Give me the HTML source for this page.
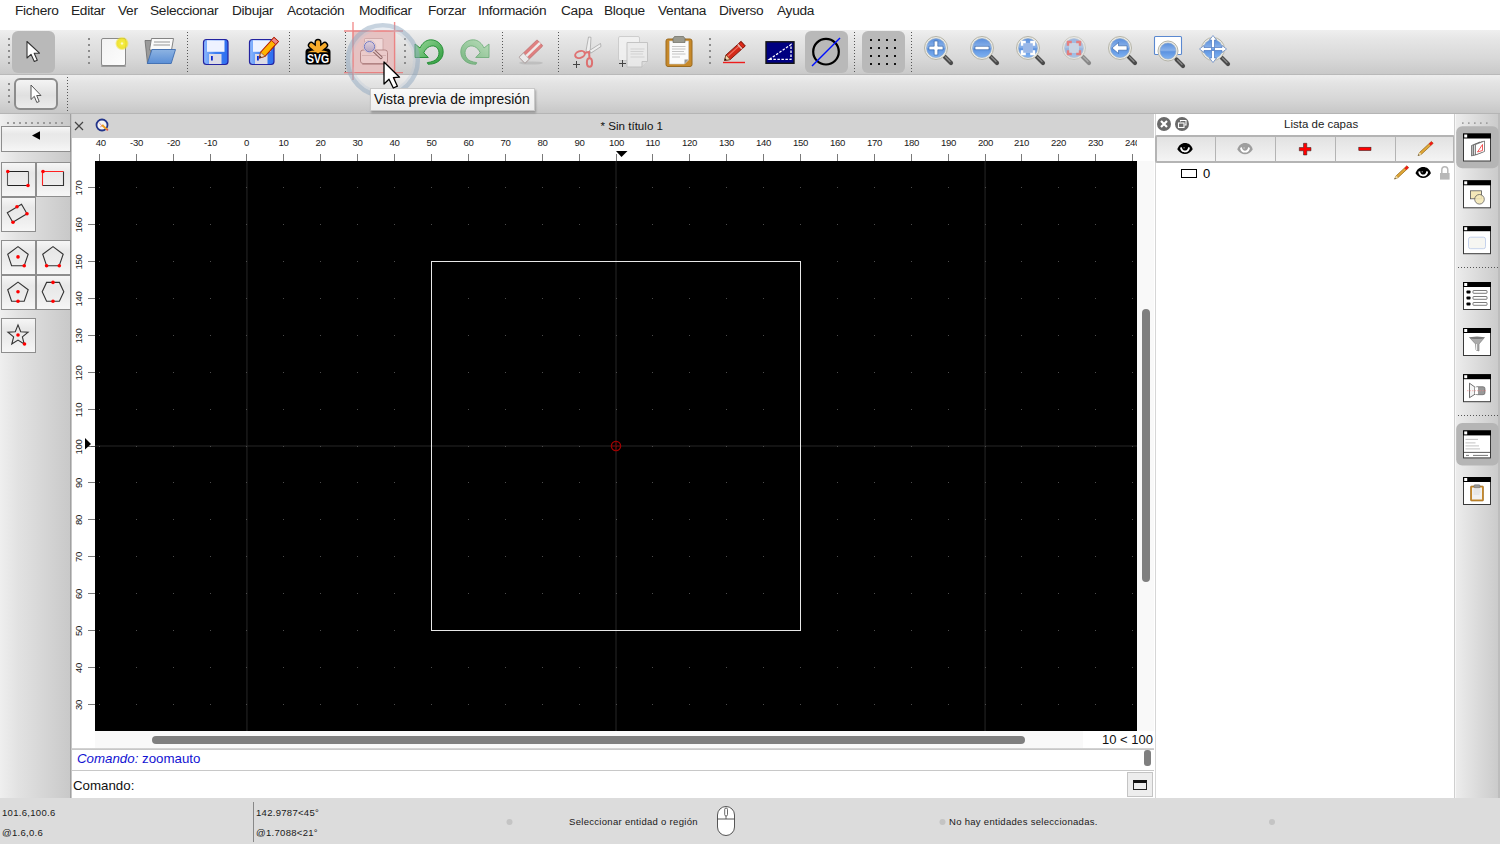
<!DOCTYPE html><html><head><meta charset="utf-8"><style>
*{margin:0;padding:0;box-sizing:border-box}
html,body{width:1500px;height:844px;overflow:hidden;background:#ececec;font-family:"Liberation Sans",sans-serif;color:#000}
.a{position:absolute}
.menu{left:0;top:0;width:1500px;height:30px;background:#fff}
.menu span{position:absolute;top:2.6px;font-size:13.7px;letter-spacing:-0.3px;color:#222}
.tb1{left:0;top:30px;width:1500px;height:45px;background:linear-gradient(#efefef,#e6e6e6 20%,#d8d8d8 65%,#c9c9c9);border-bottom:1px solid #b9b9b9}
.tb2{left:0;top:75px;width:1500px;height:39px;background:linear-gradient(#eeeeee,#e4e4e4 20%,#d6d6d6 65%,#c7c7c7);border-bottom:1px solid #b5b5b5}
.vsep{width:0;border-left:2px dotted #5a5a5a}
.grip{width:3px;background:radial-gradient(circle,#8a8a8a 1px,transparent 1.2px) 0 0/3px 8.5px}
.sel{background:#b9b9b9;border-radius:6px}
.tbx{left:0;top:114px;width:72px;height:684px;background:linear-gradient(90deg,#efefef,#e2e2e2 25%,#c9c9c9 97%,#9a9a9a 97.3%,#a8a8a8 98.6%,#c6c6c6 98.7%)}
.tbtn{width:34px;height:34px;background:linear-gradient(#f6f6f6,#e8e8e8 30%,#ececec 60%,#f6f6f6);border:1px solid #8e8e8e}
.mdi{left:72px;top:114px;width:1082px;height:684px;background:#fff}
.status{left:0;top:798px;width:1500px;height:46px;background:#dcdcdc}
.st{position:absolute;font-size:9.5px;letter-spacing:0.3px;color:#1a1a1a;white-space:nowrap}
.rl{position:absolute;font-size:9.6px;letter-spacing:-0.35px;color:#1a1a1a;white-space:nowrap}
.dock{left:1154px;top:114px;width:300px;height:684px;background:#fff}
.rtb{left:1454px;top:114px;width:46px;height:684px;background:linear-gradient(90deg,#cfcfcf 0 1px,#f6f6f6 1px 2px,#ececec 2px,#cbcbcb 44px,#bdbdbd 44px)}
</style></head><body>
<div class="a menu"><span style="left:15px">Fichero</span><span style="left:71px">Editar</span><span style="left:118px">Ver</span><span style="left:150px">Seleccionar</span><span style="left:232px">Dibujar</span><span style="left:287px">Acotación</span><span style="left:359px">Modificar</span><span style="left:428px">Forzar</span><span style="left:478px">Información</span><span style="left:561px">Capa</span><span style="left:604px">Bloque</span><span style="left:658px">Ventana</span><span style="left:719px">Diverso</span><span style="left:777px">Ayuda</span></div>
<div class="a tb1"></div>
<div class="a tb2"></div>
<div class="a sel" style="left:12px;top:31px;width:43px;height:42px"></div>
<div class="a sel" style="left:805px;top:31px;width:43px;height:42px"></div>
<div class="a sel" style="left:862px;top:31px;width:43px;height:42px"></div>
<div class="a" style="left:8px;top:38px;width:2px;height:2px;background:#8c8c8c"></div>
<div class="a" style="left:8px;top:44px;width:2px;height:2px;background:#8c8c8c"></div>
<div class="a" style="left:8px;top:50px;width:2px;height:2px;background:#8c8c8c"></div>
<div class="a" style="left:8px;top:56px;width:2px;height:2px;background:#8c8c8c"></div>
<div class="a" style="left:8px;top:62px;width:2px;height:2px;background:#8c8c8c"></div>
<div class="a" style="left:88px;top:38px;width:2px;height:2px;background:#8c8c8c"></div>
<div class="a" style="left:88px;top:44px;width:2px;height:2px;background:#8c8c8c"></div>
<div class="a" style="left:88px;top:50px;width:2px;height:2px;background:#8c8c8c"></div>
<div class="a" style="left:88px;top:56px;width:2px;height:2px;background:#8c8c8c"></div>
<div class="a" style="left:88px;top:62px;width:2px;height:2px;background:#8c8c8c"></div>
<div class="a" style="left:404px;top:38px;width:2px;height:2px;background:#8c8c8c"></div>
<div class="a" style="left:404px;top:44px;width:2px;height:2px;background:#8c8c8c"></div>
<div class="a" style="left:404px;top:50px;width:2px;height:2px;background:#8c8c8c"></div>
<div class="a" style="left:404px;top:56px;width:2px;height:2px;background:#8c8c8c"></div>
<div class="a" style="left:404px;top:62px;width:2px;height:2px;background:#8c8c8c"></div>
<div class="a" style="left:709px;top:38px;width:2px;height:2px;background:#8c8c8c"></div>
<div class="a" style="left:709px;top:44px;width:2px;height:2px;background:#8c8c8c"></div>
<div class="a" style="left:709px;top:50px;width:2px;height:2px;background:#8c8c8c"></div>
<div class="a" style="left:709px;top:56px;width:2px;height:2px;background:#8c8c8c"></div>
<div class="a" style="left:709px;top:62px;width:2px;height:2px;background:#8c8c8c"></div>
<div class="a" style="left:187px;top:32px;width:1px;height:41px;background:repeating-linear-gradient(#555 0 1px,transparent 1px 3px)"></div>
<div class="a" style="left:289px;top:32px;width:1px;height:41px;background:repeating-linear-gradient(#555 0 1px,transparent 1px 3px)"></div>
<div class="a" style="left:345px;top:32px;width:1px;height:41px;background:repeating-linear-gradient(#555 0 1px,transparent 1px 3px)"></div>
<div class="a" style="left:502px;top:32px;width:1px;height:41px;background:repeating-linear-gradient(#555 0 1px,transparent 1px 3px)"></div>
<div class="a" style="left:558px;top:32px;width:1px;height:41px;background:repeating-linear-gradient(#555 0 1px,transparent 1px 3px)"></div>
<div class="a" style="left:854px;top:32px;width:1px;height:41px;background:repeating-linear-gradient(#555 0 1px,transparent 1px 3px)"></div>
<div class="a" style="left:911px;top:32px;width:1px;height:41px;background:repeating-linear-gradient(#555 0 1px,transparent 1px 3px)"></div>
<div class="a" style="left:8px;top:83px;width:2px;height:2px;background:#8c8c8c"></div>
<div class="a" style="left:8px;top:89px;width:2px;height:2px;background:#8c8c8c"></div>
<div class="a" style="left:8px;top:95px;width:2px;height:2px;background:#8c8c8c"></div>
<div class="a" style="left:8px;top:101px;width:2px;height:2px;background:#8c8c8c"></div>
<div class="a" style="left:14px;top:78px;width:44px;height:32px;border:2px solid #8c8c8c;border-radius:6px;background:linear-gradient(#f4f4f4,#e0e0e0 55%,#ececec)"></div>
<div class="a" style="left:67px;top:77px;width:1px;height:34px;background:repeating-linear-gradient(#555 0 1px,transparent 1px 3px)"></div>
<svg class="a" style="left:0;top:0" width="1500" height="113"><defs>
<linearGradient id="lens" x1="0" y1="0" x2="0" y2="1"><stop offset="0" stop-color="#5a8fdc"/><stop offset="0.45" stop-color="#8ab2ea"/><stop offset="0.55" stop-color="#5d93e0"/><stop offset="1" stop-color="#7fb2f2"/></linearGradient>
<linearGradient id="flop" x1="0" y1="0" x2="1" y2="0"><stop offset="0" stop-color="#8fbaff"/><stop offset="0.5" stop-color="#3c7ef0"/><stop offset="1" stop-color="#2f6ff0"/></linearGradient>
<linearGradient id="folder" x1="0" y1="0" x2="0" y2="1"><stop offset="0" stop-color="#8db3e2"/><stop offset="1" stop-color="#5b8fd6"/></linearGradient>
<linearGradient id="green" x1="0" y1="0" x2="1" y2="1"><stop offset="0" stop-color="#9ad89a"/><stop offset="1" stop-color="#2a9a3a"/></linearGradient>
<radialGradient id="glow"><stop offset="0" stop-color="#ffffff"/><stop offset="0.25" stop-color="#f4ec40"/><stop offset="0.7" stop-color="#eee020" stop-opacity="0.9"/><stop offset="1" stop-color="#eee020" stop-opacity="0"/></radialGradient>
<linearGradient id="paper" x1="0" y1="0" x2="1" y2="1"><stop offset="0" stop-color="#f2f2f2"/><stop offset="1" stop-color="#fdfdfd"/></linearGradient>
</defs><path d="M27,41.5 L27,58 L31,54.3 L34.3,61.5 L37.3,60.2 L34.2,53.2 L39.5,53.2 Z" fill="#fff" stroke="#333" stroke-width="1.1" stroke-linejoin="round"/><path d="M31,85 L31,99.5 L34.3,96.3 L36.8,102.5 L39.2,101.5 L36.7,95.5 L41,95.5 Z" fill="#fff" stroke="#555" stroke-width="1" stroke-linejoin="round"/><rect x="101" y="65" width="25" height="2" rx="1" fill="#000" opacity="0.25"/><rect x="101.5" y="38.5" width="24" height="27" rx="1.5" fill="url(#paper)" stroke="#8a8a8a" stroke-width="1"/><circle cx="122" cy="43.5" r="7" fill="url(#glow)"/><path d="M145,40.5 L152,40.5 L150,63.5 L147.5,63.5 Z" fill="#9a9a9a" stroke="#6a6a6a" stroke-width="0.8"/><path d="M151.5,38.5 L173.5,38.5 L171.5,50 L149.5,50 Z" fill="#fafafa" stroke="#777" stroke-width="0.9"/><path d="M154,42 L170,42 M153.5,45 L170,45" stroke="#b8b8b8" stroke-width="1.4"/><path d="M152,49.5 L175.5,49.5 L171.2,63.5 L147.3,63.5 Z" fill="url(#folder)" stroke="#3d6cb0" stroke-width="0.9" stroke-linejoin="round"/><rect x="203.5" y="39.5" width="24.5" height="25" rx="3" fill="url(#flop)" stroke="#2323a0" stroke-width="1.2"/><rect x="207.0" y="40.3" width="17.5" height="11.5" fill="#eef2ff"/><rect x="209.0" y="54" width="12.5" height="10" fill="#dcdce6"/><rect x="211.0" y="56" width="1.8" height="4.5" fill="#0a2ad0"/><rect x="249.5" y="39.5" width="24.5" height="25" rx="3" fill="url(#flop)" stroke="#2323a0" stroke-width="1.2"/><rect x="253.0" y="40.3" width="17.5" height="11.5" fill="#eef2ff"/><rect x="255.0" y="54" width="12.5" height="10" fill="#dcdce6"/><rect x="257.0" y="56" width="1.8" height="4.5" fill="#0a2ad0"/><g transform="translate(259.5,58) rotate(-48)"><path d="M0,0 L5,-3 L25,-3 L25,3 L5,3 Z" fill="#ffb400" stroke="#b01a00" stroke-width="1"/><path d="M0,0 L5,-3 L5,3 Z" fill="#f0dcc0" stroke="#8a3a10" stroke-width="0.6"/><path d="M0,0 L2,-1.2 L2,1.2Z" fill="#222"/><rect x="21" y="-3" width="4" height="6" fill="#e88" stroke="#b01a00" stroke-width="0.8"/></g><rect x="305.5" y="48.5" width="25" height="16" rx="3.5" fill="#000"/><path d="M318,51 L318,42.3 M318,51 L311.3,45.3 M318,51 L324.7,45.3" stroke="#000" stroke-width="7" stroke-linecap="round"/><path d="M318,51 L318,42.3 M318,51 L311.3,45.3 M318,51 L324.7,45.3" stroke="#f7ab2b" stroke-width="4.2" stroke-linecap="round"/><path d="M307.5,52.3 C311,49.5 325,49.5 328.5,52.3 Z" fill="#f7ab2b"/><text x="318" y="63.3" text-anchor="middle" font-family="Liberation Sans" font-weight="bold" font-size="12.5" fill="#fff" transform="translate(318,0) scale(0.84,1) translate(-318,0)">SVG</text><path d="M415,44 L415,57.5 L428.3,57.5 L423.8,52.8 C426,47 432.5,43.8 436.8,47.5 C440.5,51 439.5,58.5 433.5,61 C431.8,61.8 429.5,62.3 427.3,62.6 L428,64.2 C434.5,64.5 441,61.5 442.8,55 C445,46.5 438,39.5 430.5,39.8 C425.8,40 422,43.5 420,48 Z" fill="url(#green)" stroke="#1e8a30" stroke-width="0.9" stroke-linejoin="round"/><g transform="translate(904,0) scale(-1,1)" opacity="0.55"><path d="M415,44 L415,57.5 L428.3,57.5 L423.8,52.8 C426,47 432.5,43.8 436.8,47.5 C440.5,51 439.5,58.5 433.5,61 C431.8,61.8 429.5,62.3 427.3,62.6 L428,64.2 C434.5,64.5 441,61.5 442.8,55 C445,46.5 438,39.5 430.5,39.8 C425.8,40 422,43.5 420,48 Z" fill="url(#green)" stroke="#1e8a30" stroke-width="0.9" stroke-linejoin="round"/></g><ellipse cx="531" cy="63" rx="12" ry="1.6" fill="#999" opacity="0.35"/><g transform="translate(531,51.5) rotate(-44)" opacity="0.7"><rect x="-12.5" y="-4.2" width="25" height="8.4" rx="1" fill="#e05858" stroke="#b04444" stroke-width="0.8"/><rect x="-12.5" y="-4.2" width="6" height="8.4" fill="#f2f2f2" stroke="#999" stroke-width="0.8"/><rect x="-6.5" y="-1.2" width="19" height="2.4" fill="#f6f0f0"/></g><g opacity="0.75"><path d="M586,51 L588.5,37 L591,37.3 L590,54 Z" fill="#f4f4f4" stroke="#888" stroke-width="0.7"/><path d="M589.5,50.5 L600.5,43.5 L601,46.5 L591,53 Z" fill="#f4f4f4" stroke="#888" stroke-width="0.7"/><ellipse cx="580" cy="54.5" rx="5" ry="3.3" transform="rotate(-20 580 54.5)" fill="none" stroke="#e05050" stroke-width="2"/><ellipse cx="589.5" cy="62.5" rx="2.6" ry="4.3" fill="none" stroke="#e05050" stroke-width="2"/><path d="M584,53 L589,52 L589.5,58" fill="none" stroke="#e05050" stroke-width="2"/></g><path d="M573,64.5 L580,64.5 M576.5,61 L576.5,68" stroke="#444" stroke-width="1"/><g opacity="0.8"><rect x="618.5" y="36.5" width="21" height="24" rx="1.5" fill="#f4f4f4" stroke="#c8c8c8"/><path d="M627,42.5 L647.5,42.5 L647.5,61 L642,67 L627,67 Z" fill="#eeeeee" stroke="#bdbdbd"/><path d="M642,67 L642,61.5 L647.5,61.5" fill="#ddd" stroke="#bdbdbd"/><path d="M630.5,49 L644.5,49 M630.5,51.5 L643.5,51.5 M630.5,54 L643,54 M630.5,57 L644.5,57" stroke="#cfcfcf" stroke-width="1"/></g><path d="M619,63.5 L626,63.5 M622.5,60 L622.5,67" stroke="#444" stroke-width="1"/><rect x="666" y="39" width="26" height="27.5" rx="2" fill="#c7892a" stroke="#9a6a20" stroke-width="1"/><path d="M669.5,41 L688.5,41 L688.5,60 L684.5,64 L669.5,64 Z" fill="#fbfbfb" stroke="#ccc" stroke-width="0.6"/><path d="M684.5,64 L684.5,59.5 L688.5,59.5 Z" fill="#999"/><path d="M672,46.5 L685.5,46.5 M672,49 L685.5,49 M672,51.5 L684,51.5 M672,54 L685.5,54 M672,57 L680,57" stroke="#c4c4c4" stroke-width="1"/><path d="M673,42.5 L673,38.5 L674.5,36.5 L683.5,36.5 L685,38.5 L685,42.5 Z" fill="#9a9a90" stroke="#6a6a60" stroke-width="0.7"/><rect x="723" y="61.8" width="22" height="1.4" fill="#ee1c1c"/><g transform="translate(724.5,60.5) rotate(-42)"><g transform="scale(0.97)"><path d="M0,0 L5,-3.2 L26,-3.2 L26,3.2 L5,3.2 Z" fill="#d42a1a" stroke="#7a1a10" stroke-width="0.9"/><path d="M5,-1 L26,-1" stroke="#f07060" stroke-width="1.2"/><path d="M0,0 L5,-3.2 L5,3.2 Z" fill="#f0d8b0" stroke="#6a3a10" stroke-width="0.6"/><path d="M0,0 L2,-1.2 L2,1.2Z" fill="#111"/><rect x="20.5" y="-3.2" width="2" height="6.4" fill="#e8b0a8"/><rect x="22.5" y="-3.2" width="3" height="6.4" rx="1" fill="#e02818" stroke="#7a1a10" stroke-width="0.6"/></g></g><rect x="766" y="41.8" width="28" height="21.5" fill="#000080" stroke="#141414" stroke-width="1.4"/><path d="M769.5,59.3 L791,44.5 L791,59.3 Z" fill="none" stroke="#fff" stroke-width="1.3" stroke-dasharray="2.5,1.5"/><circle cx="826" cy="51.7" r="12.8" fill="none" stroke="#000" stroke-width="2.2"/><line x1="812" y1="66" x2="840" y2="38" stroke="#0010ff" stroke-width="1.4"/><rect x="870" y="39" width="2" height="2" fill="#111"/><rect x="870" y="47" width="2" height="2" fill="#111"/><rect x="870" y="55" width="2" height="2" fill="#111"/><rect x="870" y="63" width="2" height="2" fill="#111"/><rect x="878" y="39" width="2" height="2" fill="#111"/><rect x="878" y="47" width="2" height="2" fill="#111"/><rect x="878" y="55" width="2" height="2" fill="#111"/><rect x="878" y="63" width="2" height="2" fill="#111"/><rect x="886" y="39" width="2" height="2" fill="#111"/><rect x="886" y="47" width="2" height="2" fill="#111"/><rect x="886" y="55" width="2" height="2" fill="#111"/><rect x="886" y="63" width="2" height="2" fill="#111"/><rect x="894" y="39" width="2" height="2" fill="#111"/><rect x="894" y="47" width="2" height="2" fill="#111"/><rect x="894" y="55" width="2" height="2" fill="#111"/><rect x="894" y="63" width="2" height="2" fill="#111"/><g><line x1="944.5" y1="56.5" x2="951" y2="63" stroke="#4a4a4a" stroke-width="4.2" stroke-linecap="round"/><line x1="945.5" y1="57" x2="950" y2="61.5" stroke="#8a8a8a" stroke-width="1.2" stroke-linecap="round"/><circle cx="936" cy="48" r="11.5" fill="#ecebe4" stroke="#b5b4a8" stroke-width="1"/><circle cx="936" cy="48" r="9.5" fill="url(#lens)" stroke="#8fa8c8" stroke-width="0.6"/><path d="M934.2,41 h3.6 v5.2 h5.2 v3.6 h-5.2 v5.2 h-3.6 v-5.2 h-5.2 v-3.6 h5.2 z" fill="#fff" stroke="#2a5aa0" stroke-width="0.6"/></g><g><line x1="990.5" y1="56.5" x2="997" y2="63" stroke="#4a4a4a" stroke-width="4.2" stroke-linecap="round"/><line x1="991.5" y1="57" x2="996" y2="61.5" stroke="#8a8a8a" stroke-width="1.2" stroke-linecap="round"/><circle cx="982" cy="48" r="11.5" fill="#ecebe4" stroke="#b5b4a8" stroke-width="1"/><circle cx="982" cy="48" r="9.5" fill="url(#lens)" stroke="#8fa8c8" stroke-width="0.6"/><rect x="975" y="46.2" width="14" height="3.6" fill="#fff" stroke="#2a5aa0" stroke-width="0.6"/></g><g><line x1="1036.5" y1="56.5" x2="1043" y2="63" stroke="#4a4a4a" stroke-width="4.2" stroke-linecap="round"/><line x1="1037.5" y1="57" x2="1042" y2="61.5" stroke="#8a8a8a" stroke-width="1.2" stroke-linecap="round"/><circle cx="1028" cy="48" r="11.5" fill="#ecebe4" stroke="#b5b4a8" stroke-width="1"/><circle cx="1028" cy="48" r="9.5" fill="url(#lens)" stroke="#8fa8c8" stroke-width="0.6"/><rect x="1023" y="43" width="10" height="10" fill="#9ab8e8"/><g stroke="#fff" stroke-width="2.4" fill="none"><path d="M1022,45.8 V42 H1025.8"/><path d="M1030.2,42 H1034 V45.8"/><path d="M1022,50.2 V54 H1025.8"/><path d="M1030.2,54 H1034 V50.2"/></g></g><g opacity="0.55"><line x1="1082.5" y1="56.5" x2="1089" y2="63" stroke="#4a4a4a" stroke-width="4.2" stroke-linecap="round"/><line x1="1083.5" y1="57" x2="1088" y2="61.5" stroke="#8a8a8a" stroke-width="1.2" stroke-linecap="round"/><circle cx="1074" cy="48" r="11.5" fill="#ecebe4" stroke="#b5b4a8" stroke-width="1"/><circle cx="1074" cy="48" r="9.5" fill="url(#lens)" stroke="#8fa8c8" stroke-width="0.6"/><rect x="1069" y="43" width="10" height="10" fill="#b8cde8"/><g stroke="#e83030" stroke-width="2.4" fill="none"><path d="M1068,45.8 V42 H1071.8"/><path d="M1076.2,42 H1080 V45.8"/><path d="M1068,50.2 V54 H1071.8"/><path d="M1076.2,54 H1080 V50.2"/></g></g><g><line x1="1128.5" y1="56.5" x2="1135" y2="63" stroke="#4a4a4a" stroke-width="4.2" stroke-linecap="round"/><line x1="1129.5" y1="57" x2="1134" y2="61.5" stroke="#8a8a8a" stroke-width="1.2" stroke-linecap="round"/><circle cx="1120" cy="48" r="11.5" fill="#ecebe4" stroke="#b5b4a8" stroke-width="1"/><circle cx="1120" cy="48" r="9.5" fill="url(#lens)" stroke="#8fa8c8" stroke-width="0.6"/><path d="M1112,48 L1118.5,42.5 L1118.5,45.8 L1127,45.8 L1127,50.2 L1118.5,50.2 L1118.5,53.5 Z" fill="#fff" stroke="#2a5aa0" stroke-width="0.6"/></g><rect x="1154.5" y="36.5" width="27" height="18" rx="1" fill="#fff" stroke="#5a88d0" stroke-width="1.1"/><g><line x1="1176.5" y1="59.5" x2="1183" y2="66" stroke="#4a4a4a" stroke-width="4.2" stroke-linecap="round"/><line x1="1177.5" y1="60" x2="1182" y2="64.5" stroke="#8a8a8a" stroke-width="1.2" stroke-linecap="round"/><circle cx="1168" cy="51" r="10" fill="#ecebe4" stroke="#b5b4a8" stroke-width="1"/><circle cx="1168" cy="51" r="8" fill="url(#lens)" stroke="#8fa8c8" stroke-width="0.6"/></g><g><line x1="1221.5" y1="57.5" x2="1228" y2="64" stroke="#4a4a4a" stroke-width="4.2" stroke-linecap="round"/><line x1="1222.5" y1="58" x2="1227" y2="62.5" stroke="#8a8a8a" stroke-width="1.2" stroke-linecap="round"/><circle cx="1213" cy="49" r="11.5" fill="#ecebe4" stroke="#b5b4a8" stroke-width="1"/><circle cx="1213" cy="49" r="9.5" fill="url(#lens)" stroke="#8fa8c8" stroke-width="0.6"/><g fill="#fff" stroke="#3a6ab8" stroke-width="0.6"><path d="M1213,35.5 L1216.5,40 L1214.5,40 L1214.5,47.5 L1211.5,47.5 L1211.5,40 L1209.5,40 Z"/><path d="M1213,62.5 L1216.5,58 L1214.5,58 L1214.5,50.5 L1211.5,50.5 L1211.5,58 L1209.5,58 Z"/><path d="M1199.5,49 L1204,45.5 L1204,47.5 L1211.5,47.5 L1211.5,50.5 L1204,50.5 L1204,52.5 Z"/><path d="M1226.5,49 L1222,45.5 L1222,47.5 L1214.5,47.5 L1214.5,50.5 L1222,50.5 L1222,52.5 Z"/></g></g></svg>
<svg class="a" style="left:0;top:0" width="1500" height="113">
<defs><linearGradient id="lensP" x1="0" y1="0" x2="0" y2="1"><stop offset="0" stop-color="#e0d0dc"/><stop offset="1" stop-color="#b4a4c0"/></linearGradient></defs>
<rect x="352.5" y="30.5" width="42" height="42" fill="#e6c2c2"/>
<rect x="362" y="63" width="24" height="2" rx="1" fill="#a06868" opacity="0.45"/>
<rect x="364.5" y="38.5" width="18.5" height="12" rx="1" fill="#f0d8d8" stroke="#c49c9c" stroke-width="0.7"/>
<rect x="360.5" y="50" width="27" height="13.5" rx="2.5" fill="#ebcaca" stroke="#a87878" stroke-width="0.8"/>
<path d="M362,55.5 H386" stroke="#c8a0a0" stroke-width="0.6"/>
<line x1="373.5" y1="50.5" x2="381" y2="57.5" stroke="#8a6060" stroke-width="3.2" stroke-linecap="round"/>
<line x1="373.5" y1="50.5" x2="381" y2="57.5" stroke="#e4c4c4" stroke-width="1.6" stroke-linecap="round"/>
<circle cx="369.5" cy="46.7" r="6.4" fill="#f4e2e2" stroke="#c8a8a8" stroke-width="0.5"/>
<circle cx="369.5" cy="46.7" r="5.2" fill="url(#lensP)" stroke="#6870c0" stroke-width="0.9"/>
<g stroke="#ee6a6a" stroke-width="1.4" opacity="0.75">
<line x1="353" y1="22" x2="353" y2="80"/><line x1="394.6" y1="22" x2="394.6" y2="80"/>
<line x1="344" y1="31" x2="403" y2="31"/><line x1="344" y1="72.6" x2="403" y2="72.6"/>
</g>
<circle cx="382.8" cy="60.3" r="35" fill="none" stroke="#8fa8c0" stroke-width="4.5" opacity="0.5"/>
<circle cx="382.8" cy="60.3" r="31.5" fill="none" stroke="#b8c8d8" stroke-width="2.5" opacity="0.3"/>
</svg>
<div class="a tbx"></div>
<div class="a" style="left:7.3px;top:122.3px;width:1.6px;height:1.6px;background:#9a9a9a"></div>
<div class="a" style="left:13.3px;top:122.3px;width:1.6px;height:1.6px;background:#9a9a9a"></div>
<div class="a" style="left:19.3px;top:122.3px;width:1.6px;height:1.6px;background:#9a9a9a"></div>
<div class="a" style="left:25.3px;top:122.3px;width:1.6px;height:1.6px;background:#9a9a9a"></div>
<div class="a" style="left:31.3px;top:122.3px;width:1.6px;height:1.6px;background:#9a9a9a"></div>
<div class="a" style="left:37.3px;top:122.3px;width:1.6px;height:1.6px;background:#9a9a9a"></div>
<div class="a" style="left:43.3px;top:122.3px;width:1.6px;height:1.6px;background:#9a9a9a"></div>
<div class="a" style="left:49.3px;top:122.3px;width:1.6px;height:1.6px;background:#9a9a9a"></div>
<div class="a" style="left:55.3px;top:122.3px;width:1.6px;height:1.6px;background:#9a9a9a"></div>
<div class="a" style="left:61.3px;top:122.3px;width:1.6px;height:1.6px;background:#9a9a9a"></div>
<div class="a tbtn" style="left:1px;top:126px;width:70px;height:26px"></div>
<svg class="a" style="left:0;top:113px" width="72" height="40"><path d="M32,22.5 L40,18.3 L40,26.8 Z" fill="#000"/></svg>
<div class="a tbtn" style="left:1px;top:162px;width:35px;height:35px"></div>
<div class="a tbtn" style="left:36px;top:162px;width:35px;height:35px"></div>
<div class="a tbtn" style="left:1px;top:197px;width:35px;height:35px"></div>
<div class="a tbtn" style="left:1px;top:240px;width:35px;height:35px"></div>
<div class="a tbtn" style="left:36px;top:240px;width:35px;height:35px"></div>
<div class="a tbtn" style="left:1px;top:275px;width:35px;height:35px"></div>
<div class="a tbtn" style="left:36px;top:275px;width:35px;height:35px"></div>
<div class="a tbtn" style="left:1px;top:318px;width:35px;height:35px"></div>
<svg class="a" style="left:0;top:113px" width="72" height="250"><g transform="translate(0,-113)"><path d="M7.5,171.5 H28.5 M7.5,185.5 H28.5" stroke="#222" stroke-width="1.1"/><path d="M7.5,171.5 V185.5 M28.5,171.5 V185.5" stroke="#555" stroke-width="1.1"/><circle cx="7.8" cy="171.5" r="1.8" fill="#ff0000"/><circle cx="28" cy="185.5" r="1.8" fill="#ff0000"/><path d="M42.5,185.5 H63.5 V171.5" fill="none" stroke="#333" stroke-width="1.1"/><path d="M42.5,185.5 V171.5 H63.5" fill="none" stroke="#ff2020" stroke-width="1.1"/><circle cx="43" cy="171.5" r="1.8" fill="#ff0000"/><path d="M7.3,212.7 L21.5,204.3 L27,213.8 L12.8,222.2 Z" fill="none" stroke="#333" stroke-width="1.1"/><circle cx="17" cy="206.8" r="1.8" fill="#ff0000"/><circle cx="27" cy="213.8" r="1.8" fill="#ff0000"/><circle cx="13" cy="222.2" r="1.8" fill="#ff0000"/><path d="M18,246.6 L28.2,254.29999999999998 L24.2,265.8 L11.6,265.8 L7.699999999999999,254.29999999999998 Z" fill="none" stroke="#333" stroke-width="1.1"/><circle cx="18" cy="256.9" r="1.8" fill="#ff0000"/><circle cx="24.2" cy="265.8" r="1.8" fill="#ff0000"/><path d="M53,246.6 L63.2,254.29999999999998 L59.2,265.8 L46.6,265.8 L42.7,254.29999999999998 Z" fill="none" stroke="#333" stroke-width="1.1"/><circle cx="46.6" cy="265.8" r="1.8" fill="#ff0000"/><circle cx="59.3" cy="265.8" r="1.8" fill="#ff0000"/><path d="M18,282.1 L28.2,289.8 L24.2,301.3 L11.6,301.3 L7.699999999999999,289.8 Z" fill="none" stroke="#333" stroke-width="1.1"/><circle cx="18" cy="291.8" r="1.8" fill="#ff0000"/><circle cx="18" cy="301.2" r="1.8" fill="#ff0000"/><path d="M42.2,291.8 L46.6,282.4 L59.4,282.4 L63.8,291.8 L59.4,301.2 L46.6,301.2 Z" fill="none" stroke="#333" stroke-width="1.1"/><circle cx="53" cy="282.4" r="1.8" fill="#ff0000"/><circle cx="53" cy="301.2" r="1.8" fill="#ff0000"/><polygon points="18.00,324.90 20.70,331.78 28.08,332.22 22.37,336.92 24.23,344.08 18.00,340.10 11.77,344.08 13.63,336.92 7.92,332.22 15.30,331.78" fill="none" stroke="#333" stroke-width="1.1" stroke-linejoin="miter"/><circle cx="18" cy="335" r="1.8" fill="#ff0000"/><circle cx="24.5" cy="344" r="1.8" fill="#ff0000"/></g></svg>
<div class="a mdi"></div>
<div class="a" style="left:72px;top:114px;width:1082px;height:24px;background:#d3d3d3"></div>
<div class="a" style="left:600.5px;top:118.5px;font-size:11.6px;color:#111">* Sin título 1</div>
<svg class="a" style="left:70px;top:113px" width="50" height="25"><path d="M5,9 L13,17 M13,9 L5,17" stroke="#444" stroke-width="1.2"/><circle cx="32" cy="12" r="5.5" fill="#f4f4f4" stroke="#22348a" stroke-width="1.8"/><path d="M29,9.5 L32,13 M30,14 L34,12" stroke="#c44" stroke-width="0.5"/><path d="M32,12 L37,16.5" stroke="#f0a020" stroke-width="2"/><circle cx="37.3" cy="16.8" r="1" fill="#e05050"/></svg>
<div class="a" style="left:95px;top:161px;width:1042px;height:570px;background:#000"></div>
<div class="a" style="left:1137px;top:161px;width:17px;height:570px;background:#f9f9f9"></div>
<div class="a" style="left:1142px;top:309px;width:8px;height:273px;background:#7f7f7f;border-radius:4px"></div>
<div class="a" style="left:95px;top:731px;width:988px;height:17px;background:#f9f9f9"></div>
<div class="a" style="left:152px;top:736px;width:873px;height:8px;background:#7f7f7f;border-radius:4px"></div>
<div class="a" style="left:1053px;top:732px;width:100px;text-align:right;font-size:13px;color:#111">10 &lt; 100</div>
<div class="a" style="left:72px;top:748px;width:1082px;height:2px;background:linear-gradient(#d8d8d8,#c2c2c2)"></div>
<div class="a" style="left:72px;top:750px;width:1082px;height:21px;background:#fff;border-bottom:1px solid #c8c8c8"></div>
<div class="a" style="left:77px;top:751px;font-size:13.3px;color:#1212d2"><i>Comando:</i> zoomauto</div>
<div class="a" style="left:1144px;top:750px;width:7px;height:16px;background:#7f7f7f;border-radius:3px"></div>
<div class="a" style="left:73px;top:778px;font-size:13.3px;color:#111">Comando:</div>
<div class="a" style="left:1127px;top:772px;width:26px;height:25px;background:#ededed;border:1px solid #c4c4c4"></div>
<div class="a" style="left:1133px;top:780px;width:14px;height:10px;border:1px solid #222;border-top:3px solid #111"></div>
<svg class="a" style="left:0;top:0" width="1500" height="844"><rect x="99" y="154" width="1" height="7" fill="#7a7a7a"/><rect x="136" y="154" width="1" height="7" fill="#7a7a7a"/><rect x="173" y="154" width="1" height="7" fill="#7a7a7a"/><rect x="210" y="154" width="1" height="7" fill="#7a7a7a"/><rect x="246" y="154" width="1" height="7" fill="#7a7a7a"/><rect x="283" y="154" width="1" height="7" fill="#7a7a7a"/><rect x="320" y="154" width="1" height="7" fill="#7a7a7a"/><rect x="357" y="154" width="1" height="7" fill="#7a7a7a"/><rect x="394" y="154" width="1" height="7" fill="#7a7a7a"/><rect x="431" y="154" width="1" height="7" fill="#7a7a7a"/><rect x="468" y="154" width="1" height="7" fill="#7a7a7a"/><rect x="505" y="154" width="1" height="7" fill="#7a7a7a"/><rect x="542" y="154" width="1" height="7" fill="#7a7a7a"/><rect x="579" y="154" width="1" height="7" fill="#7a7a7a"/><rect x="616" y="154" width="1" height="7" fill="#7a7a7a"/><rect x="652" y="154" width="1" height="7" fill="#7a7a7a"/><rect x="689" y="154" width="1" height="7" fill="#7a7a7a"/><rect x="726" y="154" width="1" height="7" fill="#7a7a7a"/><rect x="763" y="154" width="1" height="7" fill="#7a7a7a"/><rect x="800" y="154" width="1" height="7" fill="#7a7a7a"/><rect x="837" y="154" width="1" height="7" fill="#7a7a7a"/><rect x="874" y="154" width="1" height="7" fill="#7a7a7a"/><rect x="911" y="154" width="1" height="7" fill="#7a7a7a"/><rect x="948" y="154" width="1" height="7" fill="#7a7a7a"/><rect x="985" y="154" width="1" height="7" fill="#7a7a7a"/><rect x="1021" y="154" width="1" height="7" fill="#7a7a7a"/><rect x="1058" y="154" width="1" height="7" fill="#7a7a7a"/><rect x="1095" y="154" width="1" height="7" fill="#7a7a7a"/><rect x="1132" y="154" width="1" height="7" fill="#7a7a7a"/><rect x="88" y="704" width="7" height="1" fill="#7a7a7a"/><rect x="88" y="667" width="7" height="1" fill="#7a7a7a"/><rect x="88" y="630" width="7" height="1" fill="#7a7a7a"/><rect x="88" y="593" width="7" height="1" fill="#7a7a7a"/><rect x="88" y="556" width="7" height="1" fill="#7a7a7a"/><rect x="88" y="519" width="7" height="1" fill="#7a7a7a"/><rect x="88" y="482" width="7" height="1" fill="#7a7a7a"/><rect x="88" y="446" width="7" height="1" fill="#7a7a7a"/><rect x="88" y="409" width="7" height="1" fill="#7a7a7a"/><rect x="88" y="372" width="7" height="1" fill="#7a7a7a"/><rect x="88" y="335" width="7" height="1" fill="#7a7a7a"/><rect x="88" y="298" width="7" height="1" fill="#7a7a7a"/><rect x="88" y="261" width="7" height="1" fill="#7a7a7a"/><rect x="88" y="224" width="7" height="1" fill="#7a7a7a"/><rect x="88" y="187" width="7" height="1" fill="#7a7a7a"/></svg>
<div class="a" style="left:95px;top:138px;width:1042px;height:14px;overflow:hidden">
<div class="rl" style="left:-49.2px;top:-0.8px;width:60px;text-align:right">40</div>
<div class="rl" style="left:11.5px;top:-0.8px;width:60px;text-align:center">-30</div>
<div class="rl" style="left:48.5px;top:-0.8px;width:60px;text-align:center">-20</div>
<div class="rl" style="left:85.5px;top:-0.8px;width:60px;text-align:center">-10</div>
<div class="rl" style="left:121.5px;top:-0.8px;width:60px;text-align:center">0</div>
<div class="rl" style="left:158.5px;top:-0.8px;width:60px;text-align:center">10</div>
<div class="rl" style="left:195.5px;top:-0.8px;width:60px;text-align:center">20</div>
<div class="rl" style="left:232.5px;top:-0.8px;width:60px;text-align:center">30</div>
<div class="rl" style="left:269.5px;top:-0.8px;width:60px;text-align:center">40</div>
<div class="rl" style="left:306.5px;top:-0.8px;width:60px;text-align:center">50</div>
<div class="rl" style="left:343.5px;top:-0.8px;width:60px;text-align:center">60</div>
<div class="rl" style="left:380.5px;top:-0.8px;width:60px;text-align:center">70</div>
<div class="rl" style="left:417.5px;top:-0.8px;width:60px;text-align:center">80</div>
<div class="rl" style="left:454.5px;top:-0.8px;width:60px;text-align:center">90</div>
<div class="rl" style="left:491.5px;top:-0.8px;width:60px;text-align:center">100</div>
<div class="rl" style="left:527.5px;top:-0.8px;width:60px;text-align:center">110</div>
<div class="rl" style="left:564.5px;top:-0.8px;width:60px;text-align:center">120</div>
<div class="rl" style="left:601.5px;top:-0.8px;width:60px;text-align:center">130</div>
<div class="rl" style="left:638.5px;top:-0.8px;width:60px;text-align:center">140</div>
<div class="rl" style="left:675.5px;top:-0.8px;width:60px;text-align:center">150</div>
<div class="rl" style="left:712.5px;top:-0.8px;width:60px;text-align:center">160</div>
<div class="rl" style="left:749.5px;top:-0.8px;width:60px;text-align:center">170</div>
<div class="rl" style="left:786.5px;top:-0.8px;width:60px;text-align:center">180</div>
<div class="rl" style="left:823.5px;top:-0.8px;width:60px;text-align:center">190</div>
<div class="rl" style="left:860.5px;top:-0.8px;width:60px;text-align:center">200</div>
<div class="rl" style="left:896.5px;top:-0.8px;width:60px;text-align:center">210</div>
<div class="rl" style="left:933.5px;top:-0.8px;width:60px;text-align:center">220</div>
<div class="rl" style="left:970.5px;top:-0.8px;width:60px;text-align:center">230</div>
<div class="rl" style="left:1007.5px;top:-0.8px;width:60px;text-align:center">240</div>
</div>
<div class="rl" style="left:48.5px;top:698.5px;width:60px;height:12px;text-align:center;transform:rotate(-90deg)">30</div>
<div class="rl" style="left:48.5px;top:661.5px;width:60px;height:12px;text-align:center;transform:rotate(-90deg)">40</div>
<div class="rl" style="left:48.5px;top:624.5px;width:60px;height:12px;text-align:center;transform:rotate(-90deg)">50</div>
<div class="rl" style="left:48.5px;top:587.5px;width:60px;height:12px;text-align:center;transform:rotate(-90deg)">60</div>
<div class="rl" style="left:48.5px;top:550.5px;width:60px;height:12px;text-align:center;transform:rotate(-90deg)">70</div>
<div class="rl" style="left:48.5px;top:513.5px;width:60px;height:12px;text-align:center;transform:rotate(-90deg)">80</div>
<div class="rl" style="left:48.5px;top:476.5px;width:60px;height:12px;text-align:center;transform:rotate(-90deg)">90</div>
<div class="rl" style="left:48.5px;top:440.5px;width:60px;height:12px;text-align:center;transform:rotate(-90deg)">100</div>
<div class="rl" style="left:48.5px;top:403.5px;width:60px;height:12px;text-align:center;transform:rotate(-90deg)">110</div>
<div class="rl" style="left:48.5px;top:366.5px;width:60px;height:12px;text-align:center;transform:rotate(-90deg)">120</div>
<div class="rl" style="left:48.5px;top:329.5px;width:60px;height:12px;text-align:center;transform:rotate(-90deg)">130</div>
<div class="rl" style="left:48.5px;top:292.5px;width:60px;height:12px;text-align:center;transform:rotate(-90deg)">140</div>
<div class="rl" style="left:48.5px;top:255.5px;width:60px;height:12px;text-align:center;transform:rotate(-90deg)">150</div>
<div class="rl" style="left:48.5px;top:218.5px;width:60px;height:12px;text-align:center;transform:rotate(-90deg)">160</div>
<div class="rl" style="left:48.5px;top:181.5px;width:60px;height:12px;text-align:center;transform:rotate(-90deg)">170</div>
<svg class="a" style="left:0;top:0" width="700" height="460"><path d="M616,151 L627.5,151 L621.5,157 Z" fill="#000"/><path d="M85,438 L85,449.5 L91,444 Z" fill="#000"/><rect x="91" y="446" width="4" height="1" fill="#555"/></svg>
<svg class="a" style="left:95px;top:161px" width="1042" height="570"><g transform="translate(-95,-161)"><rect x="246.45" y="161" width="1" height="570" fill="#262626"/><rect x="615.50" y="161" width="1" height="570" fill="#262626"/><rect x="984.55" y="161" width="1" height="570" fill="#262626"/><rect x="95" y="445.50" width="1042" height="1" fill="#262626"/><rect x="99" y="704" width="1" height="1" fill="#4c4c4c"/><rect x="99" y="667" width="1" height="1" fill="#4c4c4c"/><rect x="99" y="630" width="1" height="1" fill="#4c4c4c"/><rect x="99" y="593" width="1" height="1" fill="#4c4c4c"/><rect x="99" y="556" width="1" height="1" fill="#4c4c4c"/><rect x="99" y="519" width="1" height="1" fill="#4c4c4c"/><rect x="99" y="482" width="1" height="1" fill="#4c4c4c"/><rect x="99" y="446" width="1" height="1" fill="#4c4c4c"/><rect x="99" y="409" width="1" height="1" fill="#4c4c4c"/><rect x="99" y="372" width="1" height="1" fill="#4c4c4c"/><rect x="99" y="335" width="1" height="1" fill="#4c4c4c"/><rect x="99" y="298" width="1" height="1" fill="#4c4c4c"/><rect x="99" y="261" width="1" height="1" fill="#4c4c4c"/><rect x="99" y="224" width="1" height="1" fill="#4c4c4c"/><rect x="99" y="187" width="1" height="1" fill="#4c4c4c"/><rect x="136" y="704" width="1" height="1" fill="#4c4c4c"/><rect x="136" y="667" width="1" height="1" fill="#4c4c4c"/><rect x="136" y="630" width="1" height="1" fill="#4c4c4c"/><rect x="136" y="593" width="1" height="1" fill="#4c4c4c"/><rect x="136" y="556" width="1" height="1" fill="#4c4c4c"/><rect x="136" y="519" width="1" height="1" fill="#4c4c4c"/><rect x="136" y="482" width="1" height="1" fill="#4c4c4c"/><rect x="136" y="446" width="1" height="1" fill="#4c4c4c"/><rect x="136" y="409" width="1" height="1" fill="#4c4c4c"/><rect x="136" y="372" width="1" height="1" fill="#4c4c4c"/><rect x="136" y="335" width="1" height="1" fill="#4c4c4c"/><rect x="136" y="298" width="1" height="1" fill="#4c4c4c"/><rect x="136" y="261" width="1" height="1" fill="#4c4c4c"/><rect x="136" y="224" width="1" height="1" fill="#4c4c4c"/><rect x="136" y="187" width="1" height="1" fill="#4c4c4c"/><rect x="173" y="704" width="1" height="1" fill="#4c4c4c"/><rect x="173" y="667" width="1" height="1" fill="#4c4c4c"/><rect x="173" y="630" width="1" height="1" fill="#4c4c4c"/><rect x="173" y="593" width="1" height="1" fill="#4c4c4c"/><rect x="173" y="556" width="1" height="1" fill="#4c4c4c"/><rect x="173" y="519" width="1" height="1" fill="#4c4c4c"/><rect x="173" y="482" width="1" height="1" fill="#4c4c4c"/><rect x="173" y="446" width="1" height="1" fill="#4c4c4c"/><rect x="173" y="409" width="1" height="1" fill="#4c4c4c"/><rect x="173" y="372" width="1" height="1" fill="#4c4c4c"/><rect x="173" y="335" width="1" height="1" fill="#4c4c4c"/><rect x="173" y="298" width="1" height="1" fill="#4c4c4c"/><rect x="173" y="261" width="1" height="1" fill="#4c4c4c"/><rect x="173" y="224" width="1" height="1" fill="#4c4c4c"/><rect x="173" y="187" width="1" height="1" fill="#4c4c4c"/><rect x="210" y="704" width="1" height="1" fill="#4c4c4c"/><rect x="210" y="667" width="1" height="1" fill="#4c4c4c"/><rect x="210" y="630" width="1" height="1" fill="#4c4c4c"/><rect x="210" y="593" width="1" height="1" fill="#4c4c4c"/><rect x="210" y="556" width="1" height="1" fill="#4c4c4c"/><rect x="210" y="519" width="1" height="1" fill="#4c4c4c"/><rect x="210" y="482" width="1" height="1" fill="#4c4c4c"/><rect x="210" y="446" width="1" height="1" fill="#4c4c4c"/><rect x="210" y="409" width="1" height="1" fill="#4c4c4c"/><rect x="210" y="372" width="1" height="1" fill="#4c4c4c"/><rect x="210" y="335" width="1" height="1" fill="#4c4c4c"/><rect x="210" y="298" width="1" height="1" fill="#4c4c4c"/><rect x="210" y="261" width="1" height="1" fill="#4c4c4c"/><rect x="210" y="224" width="1" height="1" fill="#4c4c4c"/><rect x="210" y="187" width="1" height="1" fill="#4c4c4c"/><rect x="246" y="704" width="1" height="1" fill="#4c4c4c"/><rect x="246" y="667" width="1" height="1" fill="#4c4c4c"/><rect x="246" y="630" width="1" height="1" fill="#4c4c4c"/><rect x="246" y="593" width="1" height="1" fill="#4c4c4c"/><rect x="246" y="556" width="1" height="1" fill="#4c4c4c"/><rect x="246" y="519" width="1" height="1" fill="#4c4c4c"/><rect x="246" y="482" width="1" height="1" fill="#4c4c4c"/><rect x="246" y="446" width="1" height="1" fill="#4c4c4c"/><rect x="246" y="409" width="1" height="1" fill="#4c4c4c"/><rect x="246" y="372" width="1" height="1" fill="#4c4c4c"/><rect x="246" y="335" width="1" height="1" fill="#4c4c4c"/><rect x="246" y="298" width="1" height="1" fill="#4c4c4c"/><rect x="246" y="261" width="1" height="1" fill="#4c4c4c"/><rect x="246" y="224" width="1" height="1" fill="#4c4c4c"/><rect x="246" y="187" width="1" height="1" fill="#4c4c4c"/><rect x="283" y="704" width="1" height="1" fill="#4c4c4c"/><rect x="283" y="667" width="1" height="1" fill="#4c4c4c"/><rect x="283" y="630" width="1" height="1" fill="#4c4c4c"/><rect x="283" y="593" width="1" height="1" fill="#4c4c4c"/><rect x="283" y="556" width="1" height="1" fill="#4c4c4c"/><rect x="283" y="519" width="1" height="1" fill="#4c4c4c"/><rect x="283" y="482" width="1" height="1" fill="#4c4c4c"/><rect x="283" y="446" width="1" height="1" fill="#4c4c4c"/><rect x="283" y="409" width="1" height="1" fill="#4c4c4c"/><rect x="283" y="372" width="1" height="1" fill="#4c4c4c"/><rect x="283" y="335" width="1" height="1" fill="#4c4c4c"/><rect x="283" y="298" width="1" height="1" fill="#4c4c4c"/><rect x="283" y="261" width="1" height="1" fill="#4c4c4c"/><rect x="283" y="224" width="1" height="1" fill="#4c4c4c"/><rect x="283" y="187" width="1" height="1" fill="#4c4c4c"/><rect x="320" y="704" width="1" height="1" fill="#4c4c4c"/><rect x="320" y="667" width="1" height="1" fill="#4c4c4c"/><rect x="320" y="630" width="1" height="1" fill="#4c4c4c"/><rect x="320" y="593" width="1" height="1" fill="#4c4c4c"/><rect x="320" y="556" width="1" height="1" fill="#4c4c4c"/><rect x="320" y="519" width="1" height="1" fill="#4c4c4c"/><rect x="320" y="482" width="1" height="1" fill="#4c4c4c"/><rect x="320" y="446" width="1" height="1" fill="#4c4c4c"/><rect x="320" y="409" width="1" height="1" fill="#4c4c4c"/><rect x="320" y="372" width="1" height="1" fill="#4c4c4c"/><rect x="320" y="335" width="1" height="1" fill="#4c4c4c"/><rect x="320" y="298" width="1" height="1" fill="#4c4c4c"/><rect x="320" y="261" width="1" height="1" fill="#4c4c4c"/><rect x="320" y="224" width="1" height="1" fill="#4c4c4c"/><rect x="320" y="187" width="1" height="1" fill="#4c4c4c"/><rect x="357" y="704" width="1" height="1" fill="#4c4c4c"/><rect x="357" y="667" width="1" height="1" fill="#4c4c4c"/><rect x="357" y="630" width="1" height="1" fill="#4c4c4c"/><rect x="357" y="593" width="1" height="1" fill="#4c4c4c"/><rect x="357" y="556" width="1" height="1" fill="#4c4c4c"/><rect x="357" y="519" width="1" height="1" fill="#4c4c4c"/><rect x="357" y="482" width="1" height="1" fill="#4c4c4c"/><rect x="357" y="446" width="1" height="1" fill="#4c4c4c"/><rect x="357" y="409" width="1" height="1" fill="#4c4c4c"/><rect x="357" y="372" width="1" height="1" fill="#4c4c4c"/><rect x="357" y="335" width="1" height="1" fill="#4c4c4c"/><rect x="357" y="298" width="1" height="1" fill="#4c4c4c"/><rect x="357" y="261" width="1" height="1" fill="#4c4c4c"/><rect x="357" y="224" width="1" height="1" fill="#4c4c4c"/><rect x="357" y="187" width="1" height="1" fill="#4c4c4c"/><rect x="394" y="704" width="1" height="1" fill="#4c4c4c"/><rect x="394" y="667" width="1" height="1" fill="#4c4c4c"/><rect x="394" y="630" width="1" height="1" fill="#4c4c4c"/><rect x="394" y="593" width="1" height="1" fill="#4c4c4c"/><rect x="394" y="556" width="1" height="1" fill="#4c4c4c"/><rect x="394" y="519" width="1" height="1" fill="#4c4c4c"/><rect x="394" y="482" width="1" height="1" fill="#4c4c4c"/><rect x="394" y="446" width="1" height="1" fill="#4c4c4c"/><rect x="394" y="409" width="1" height="1" fill="#4c4c4c"/><rect x="394" y="372" width="1" height="1" fill="#4c4c4c"/><rect x="394" y="335" width="1" height="1" fill="#4c4c4c"/><rect x="394" y="298" width="1" height="1" fill="#4c4c4c"/><rect x="394" y="261" width="1" height="1" fill="#4c4c4c"/><rect x="394" y="224" width="1" height="1" fill="#4c4c4c"/><rect x="394" y="187" width="1" height="1" fill="#4c4c4c"/><rect x="431" y="704" width="1" height="1" fill="#4c4c4c"/><rect x="431" y="667" width="1" height="1" fill="#4c4c4c"/><rect x="431" y="630" width="1" height="1" fill="#4c4c4c"/><rect x="431" y="593" width="1" height="1" fill="#4c4c4c"/><rect x="431" y="556" width="1" height="1" fill="#4c4c4c"/><rect x="431" y="519" width="1" height="1" fill="#4c4c4c"/><rect x="431" y="482" width="1" height="1" fill="#4c4c4c"/><rect x="431" y="446" width="1" height="1" fill="#4c4c4c"/><rect x="431" y="409" width="1" height="1" fill="#4c4c4c"/><rect x="431" y="372" width="1" height="1" fill="#4c4c4c"/><rect x="431" y="335" width="1" height="1" fill="#4c4c4c"/><rect x="431" y="298" width="1" height="1" fill="#4c4c4c"/><rect x="431" y="261" width="1" height="1" fill="#4c4c4c"/><rect x="431" y="224" width="1" height="1" fill="#4c4c4c"/><rect x="431" y="187" width="1" height="1" fill="#4c4c4c"/><rect x="468" y="704" width="1" height="1" fill="#4c4c4c"/><rect x="468" y="667" width="1" height="1" fill="#4c4c4c"/><rect x="468" y="630" width="1" height="1" fill="#4c4c4c"/><rect x="468" y="593" width="1" height="1" fill="#4c4c4c"/><rect x="468" y="556" width="1" height="1" fill="#4c4c4c"/><rect x="468" y="519" width="1" height="1" fill="#4c4c4c"/><rect x="468" y="482" width="1" height="1" fill="#4c4c4c"/><rect x="468" y="446" width="1" height="1" fill="#4c4c4c"/><rect x="468" y="409" width="1" height="1" fill="#4c4c4c"/><rect x="468" y="372" width="1" height="1" fill="#4c4c4c"/><rect x="468" y="335" width="1" height="1" fill="#4c4c4c"/><rect x="468" y="298" width="1" height="1" fill="#4c4c4c"/><rect x="468" y="261" width="1" height="1" fill="#4c4c4c"/><rect x="468" y="224" width="1" height="1" fill="#4c4c4c"/><rect x="468" y="187" width="1" height="1" fill="#4c4c4c"/><rect x="505" y="704" width="1" height="1" fill="#4c4c4c"/><rect x="505" y="667" width="1" height="1" fill="#4c4c4c"/><rect x="505" y="630" width="1" height="1" fill="#4c4c4c"/><rect x="505" y="593" width="1" height="1" fill="#4c4c4c"/><rect x="505" y="556" width="1" height="1" fill="#4c4c4c"/><rect x="505" y="519" width="1" height="1" fill="#4c4c4c"/><rect x="505" y="482" width="1" height="1" fill="#4c4c4c"/><rect x="505" y="446" width="1" height="1" fill="#4c4c4c"/><rect x="505" y="409" width="1" height="1" fill="#4c4c4c"/><rect x="505" y="372" width="1" height="1" fill="#4c4c4c"/><rect x="505" y="335" width="1" height="1" fill="#4c4c4c"/><rect x="505" y="298" width="1" height="1" fill="#4c4c4c"/><rect x="505" y="261" width="1" height="1" fill="#4c4c4c"/><rect x="505" y="224" width="1" height="1" fill="#4c4c4c"/><rect x="505" y="187" width="1" height="1" fill="#4c4c4c"/><rect x="542" y="704" width="1" height="1" fill="#4c4c4c"/><rect x="542" y="667" width="1" height="1" fill="#4c4c4c"/><rect x="542" y="630" width="1" height="1" fill="#4c4c4c"/><rect x="542" y="593" width="1" height="1" fill="#4c4c4c"/><rect x="542" y="556" width="1" height="1" fill="#4c4c4c"/><rect x="542" y="519" width="1" height="1" fill="#4c4c4c"/><rect x="542" y="482" width="1" height="1" fill="#4c4c4c"/><rect x="542" y="446" width="1" height="1" fill="#4c4c4c"/><rect x="542" y="409" width="1" height="1" fill="#4c4c4c"/><rect x="542" y="372" width="1" height="1" fill="#4c4c4c"/><rect x="542" y="335" width="1" height="1" fill="#4c4c4c"/><rect x="542" y="298" width="1" height="1" fill="#4c4c4c"/><rect x="542" y="261" width="1" height="1" fill="#4c4c4c"/><rect x="542" y="224" width="1" height="1" fill="#4c4c4c"/><rect x="542" y="187" width="1" height="1" fill="#4c4c4c"/><rect x="579" y="704" width="1" height="1" fill="#4c4c4c"/><rect x="579" y="667" width="1" height="1" fill="#4c4c4c"/><rect x="579" y="630" width="1" height="1" fill="#4c4c4c"/><rect x="579" y="593" width="1" height="1" fill="#4c4c4c"/><rect x="579" y="556" width="1" height="1" fill="#4c4c4c"/><rect x="579" y="519" width="1" height="1" fill="#4c4c4c"/><rect x="579" y="482" width="1" height="1" fill="#4c4c4c"/><rect x="579" y="446" width="1" height="1" fill="#4c4c4c"/><rect x="579" y="409" width="1" height="1" fill="#4c4c4c"/><rect x="579" y="372" width="1" height="1" fill="#4c4c4c"/><rect x="579" y="335" width="1" height="1" fill="#4c4c4c"/><rect x="579" y="298" width="1" height="1" fill="#4c4c4c"/><rect x="579" y="261" width="1" height="1" fill="#4c4c4c"/><rect x="579" y="224" width="1" height="1" fill="#4c4c4c"/><rect x="579" y="187" width="1" height="1" fill="#4c4c4c"/><rect x="616" y="704" width="1" height="1" fill="#4c4c4c"/><rect x="616" y="667" width="1" height="1" fill="#4c4c4c"/><rect x="616" y="630" width="1" height="1" fill="#4c4c4c"/><rect x="616" y="593" width="1" height="1" fill="#4c4c4c"/><rect x="616" y="556" width="1" height="1" fill="#4c4c4c"/><rect x="616" y="519" width="1" height="1" fill="#4c4c4c"/><rect x="616" y="482" width="1" height="1" fill="#4c4c4c"/><rect x="616" y="446" width="1" height="1" fill="#4c4c4c"/><rect x="616" y="409" width="1" height="1" fill="#4c4c4c"/><rect x="616" y="372" width="1" height="1" fill="#4c4c4c"/><rect x="616" y="335" width="1" height="1" fill="#4c4c4c"/><rect x="616" y="298" width="1" height="1" fill="#4c4c4c"/><rect x="616" y="261" width="1" height="1" fill="#4c4c4c"/><rect x="616" y="224" width="1" height="1" fill="#4c4c4c"/><rect x="616" y="187" width="1" height="1" fill="#4c4c4c"/><rect x="652" y="704" width="1" height="1" fill="#4c4c4c"/><rect x="652" y="667" width="1" height="1" fill="#4c4c4c"/><rect x="652" y="630" width="1" height="1" fill="#4c4c4c"/><rect x="652" y="593" width="1" height="1" fill="#4c4c4c"/><rect x="652" y="556" width="1" height="1" fill="#4c4c4c"/><rect x="652" y="519" width="1" height="1" fill="#4c4c4c"/><rect x="652" y="482" width="1" height="1" fill="#4c4c4c"/><rect x="652" y="446" width="1" height="1" fill="#4c4c4c"/><rect x="652" y="409" width="1" height="1" fill="#4c4c4c"/><rect x="652" y="372" width="1" height="1" fill="#4c4c4c"/><rect x="652" y="335" width="1" height="1" fill="#4c4c4c"/><rect x="652" y="298" width="1" height="1" fill="#4c4c4c"/><rect x="652" y="261" width="1" height="1" fill="#4c4c4c"/><rect x="652" y="224" width="1" height="1" fill="#4c4c4c"/><rect x="652" y="187" width="1" height="1" fill="#4c4c4c"/><rect x="689" y="704" width="1" height="1" fill="#4c4c4c"/><rect x="689" y="667" width="1" height="1" fill="#4c4c4c"/><rect x="689" y="630" width="1" height="1" fill="#4c4c4c"/><rect x="689" y="593" width="1" height="1" fill="#4c4c4c"/><rect x="689" y="556" width="1" height="1" fill="#4c4c4c"/><rect x="689" y="519" width="1" height="1" fill="#4c4c4c"/><rect x="689" y="482" width="1" height="1" fill="#4c4c4c"/><rect x="689" y="446" width="1" height="1" fill="#4c4c4c"/><rect x="689" y="409" width="1" height="1" fill="#4c4c4c"/><rect x="689" y="372" width="1" height="1" fill="#4c4c4c"/><rect x="689" y="335" width="1" height="1" fill="#4c4c4c"/><rect x="689" y="298" width="1" height="1" fill="#4c4c4c"/><rect x="689" y="261" width="1" height="1" fill="#4c4c4c"/><rect x="689" y="224" width="1" height="1" fill="#4c4c4c"/><rect x="689" y="187" width="1" height="1" fill="#4c4c4c"/><rect x="726" y="704" width="1" height="1" fill="#4c4c4c"/><rect x="726" y="667" width="1" height="1" fill="#4c4c4c"/><rect x="726" y="630" width="1" height="1" fill="#4c4c4c"/><rect x="726" y="593" width="1" height="1" fill="#4c4c4c"/><rect x="726" y="556" width="1" height="1" fill="#4c4c4c"/><rect x="726" y="519" width="1" height="1" fill="#4c4c4c"/><rect x="726" y="482" width="1" height="1" fill="#4c4c4c"/><rect x="726" y="446" width="1" height="1" fill="#4c4c4c"/><rect x="726" y="409" width="1" height="1" fill="#4c4c4c"/><rect x="726" y="372" width="1" height="1" fill="#4c4c4c"/><rect x="726" y="335" width="1" height="1" fill="#4c4c4c"/><rect x="726" y="298" width="1" height="1" fill="#4c4c4c"/><rect x="726" y="261" width="1" height="1" fill="#4c4c4c"/><rect x="726" y="224" width="1" height="1" fill="#4c4c4c"/><rect x="726" y="187" width="1" height="1" fill="#4c4c4c"/><rect x="763" y="704" width="1" height="1" fill="#4c4c4c"/><rect x="763" y="667" width="1" height="1" fill="#4c4c4c"/><rect x="763" y="630" width="1" height="1" fill="#4c4c4c"/><rect x="763" y="593" width="1" height="1" fill="#4c4c4c"/><rect x="763" y="556" width="1" height="1" fill="#4c4c4c"/><rect x="763" y="519" width="1" height="1" fill="#4c4c4c"/><rect x="763" y="482" width="1" height="1" fill="#4c4c4c"/><rect x="763" y="446" width="1" height="1" fill="#4c4c4c"/><rect x="763" y="409" width="1" height="1" fill="#4c4c4c"/><rect x="763" y="372" width="1" height="1" fill="#4c4c4c"/><rect x="763" y="335" width="1" height="1" fill="#4c4c4c"/><rect x="763" y="298" width="1" height="1" fill="#4c4c4c"/><rect x="763" y="261" width="1" height="1" fill="#4c4c4c"/><rect x="763" y="224" width="1" height="1" fill="#4c4c4c"/><rect x="763" y="187" width="1" height="1" fill="#4c4c4c"/><rect x="800" y="704" width="1" height="1" fill="#4c4c4c"/><rect x="800" y="667" width="1" height="1" fill="#4c4c4c"/><rect x="800" y="630" width="1" height="1" fill="#4c4c4c"/><rect x="800" y="593" width="1" height="1" fill="#4c4c4c"/><rect x="800" y="556" width="1" height="1" fill="#4c4c4c"/><rect x="800" y="519" width="1" height="1" fill="#4c4c4c"/><rect x="800" y="482" width="1" height="1" fill="#4c4c4c"/><rect x="800" y="446" width="1" height="1" fill="#4c4c4c"/><rect x="800" y="409" width="1" height="1" fill="#4c4c4c"/><rect x="800" y="372" width="1" height="1" fill="#4c4c4c"/><rect x="800" y="335" width="1" height="1" fill="#4c4c4c"/><rect x="800" y="298" width="1" height="1" fill="#4c4c4c"/><rect x="800" y="261" width="1" height="1" fill="#4c4c4c"/><rect x="800" y="224" width="1" height="1" fill="#4c4c4c"/><rect x="800" y="187" width="1" height="1" fill="#4c4c4c"/><rect x="837" y="704" width="1" height="1" fill="#4c4c4c"/><rect x="837" y="667" width="1" height="1" fill="#4c4c4c"/><rect x="837" y="630" width="1" height="1" fill="#4c4c4c"/><rect x="837" y="593" width="1" height="1" fill="#4c4c4c"/><rect x="837" y="556" width="1" height="1" fill="#4c4c4c"/><rect x="837" y="519" width="1" height="1" fill="#4c4c4c"/><rect x="837" y="482" width="1" height="1" fill="#4c4c4c"/><rect x="837" y="446" width="1" height="1" fill="#4c4c4c"/><rect x="837" y="409" width="1" height="1" fill="#4c4c4c"/><rect x="837" y="372" width="1" height="1" fill="#4c4c4c"/><rect x="837" y="335" width="1" height="1" fill="#4c4c4c"/><rect x="837" y="298" width="1" height="1" fill="#4c4c4c"/><rect x="837" y="261" width="1" height="1" fill="#4c4c4c"/><rect x="837" y="224" width="1" height="1" fill="#4c4c4c"/><rect x="837" y="187" width="1" height="1" fill="#4c4c4c"/><rect x="874" y="704" width="1" height="1" fill="#4c4c4c"/><rect x="874" y="667" width="1" height="1" fill="#4c4c4c"/><rect x="874" y="630" width="1" height="1" fill="#4c4c4c"/><rect x="874" y="593" width="1" height="1" fill="#4c4c4c"/><rect x="874" y="556" width="1" height="1" fill="#4c4c4c"/><rect x="874" y="519" width="1" height="1" fill="#4c4c4c"/><rect x="874" y="482" width="1" height="1" fill="#4c4c4c"/><rect x="874" y="446" width="1" height="1" fill="#4c4c4c"/><rect x="874" y="409" width="1" height="1" fill="#4c4c4c"/><rect x="874" y="372" width="1" height="1" fill="#4c4c4c"/><rect x="874" y="335" width="1" height="1" fill="#4c4c4c"/><rect x="874" y="298" width="1" height="1" fill="#4c4c4c"/><rect x="874" y="261" width="1" height="1" fill="#4c4c4c"/><rect x="874" y="224" width="1" height="1" fill="#4c4c4c"/><rect x="874" y="187" width="1" height="1" fill="#4c4c4c"/><rect x="911" y="704" width="1" height="1" fill="#4c4c4c"/><rect x="911" y="667" width="1" height="1" fill="#4c4c4c"/><rect x="911" y="630" width="1" height="1" fill="#4c4c4c"/><rect x="911" y="593" width="1" height="1" fill="#4c4c4c"/><rect x="911" y="556" width="1" height="1" fill="#4c4c4c"/><rect x="911" y="519" width="1" height="1" fill="#4c4c4c"/><rect x="911" y="482" width="1" height="1" fill="#4c4c4c"/><rect x="911" y="446" width="1" height="1" fill="#4c4c4c"/><rect x="911" y="409" width="1" height="1" fill="#4c4c4c"/><rect x="911" y="372" width="1" height="1" fill="#4c4c4c"/><rect x="911" y="335" width="1" height="1" fill="#4c4c4c"/><rect x="911" y="298" width="1" height="1" fill="#4c4c4c"/><rect x="911" y="261" width="1" height="1" fill="#4c4c4c"/><rect x="911" y="224" width="1" height="1" fill="#4c4c4c"/><rect x="911" y="187" width="1" height="1" fill="#4c4c4c"/><rect x="948" y="704" width="1" height="1" fill="#4c4c4c"/><rect x="948" y="667" width="1" height="1" fill="#4c4c4c"/><rect x="948" y="630" width="1" height="1" fill="#4c4c4c"/><rect x="948" y="593" width="1" height="1" fill="#4c4c4c"/><rect x="948" y="556" width="1" height="1" fill="#4c4c4c"/><rect x="948" y="519" width="1" height="1" fill="#4c4c4c"/><rect x="948" y="482" width="1" height="1" fill="#4c4c4c"/><rect x="948" y="446" width="1" height="1" fill="#4c4c4c"/><rect x="948" y="409" width="1" height="1" fill="#4c4c4c"/><rect x="948" y="372" width="1" height="1" fill="#4c4c4c"/><rect x="948" y="335" width="1" height="1" fill="#4c4c4c"/><rect x="948" y="298" width="1" height="1" fill="#4c4c4c"/><rect x="948" y="261" width="1" height="1" fill="#4c4c4c"/><rect x="948" y="224" width="1" height="1" fill="#4c4c4c"/><rect x="948" y="187" width="1" height="1" fill="#4c4c4c"/><rect x="985" y="704" width="1" height="1" fill="#4c4c4c"/><rect x="985" y="667" width="1" height="1" fill="#4c4c4c"/><rect x="985" y="630" width="1" height="1" fill="#4c4c4c"/><rect x="985" y="593" width="1" height="1" fill="#4c4c4c"/><rect x="985" y="556" width="1" height="1" fill="#4c4c4c"/><rect x="985" y="519" width="1" height="1" fill="#4c4c4c"/><rect x="985" y="482" width="1" height="1" fill="#4c4c4c"/><rect x="985" y="446" width="1" height="1" fill="#4c4c4c"/><rect x="985" y="409" width="1" height="1" fill="#4c4c4c"/><rect x="985" y="372" width="1" height="1" fill="#4c4c4c"/><rect x="985" y="335" width="1" height="1" fill="#4c4c4c"/><rect x="985" y="298" width="1" height="1" fill="#4c4c4c"/><rect x="985" y="261" width="1" height="1" fill="#4c4c4c"/><rect x="985" y="224" width="1" height="1" fill="#4c4c4c"/><rect x="985" y="187" width="1" height="1" fill="#4c4c4c"/><rect x="1021" y="704" width="1" height="1" fill="#4c4c4c"/><rect x="1021" y="667" width="1" height="1" fill="#4c4c4c"/><rect x="1021" y="630" width="1" height="1" fill="#4c4c4c"/><rect x="1021" y="593" width="1" height="1" fill="#4c4c4c"/><rect x="1021" y="556" width="1" height="1" fill="#4c4c4c"/><rect x="1021" y="519" width="1" height="1" fill="#4c4c4c"/><rect x="1021" y="482" width="1" height="1" fill="#4c4c4c"/><rect x="1021" y="446" width="1" height="1" fill="#4c4c4c"/><rect x="1021" y="409" width="1" height="1" fill="#4c4c4c"/><rect x="1021" y="372" width="1" height="1" fill="#4c4c4c"/><rect x="1021" y="335" width="1" height="1" fill="#4c4c4c"/><rect x="1021" y="298" width="1" height="1" fill="#4c4c4c"/><rect x="1021" y="261" width="1" height="1" fill="#4c4c4c"/><rect x="1021" y="224" width="1" height="1" fill="#4c4c4c"/><rect x="1021" y="187" width="1" height="1" fill="#4c4c4c"/><rect x="1058" y="704" width="1" height="1" fill="#4c4c4c"/><rect x="1058" y="667" width="1" height="1" fill="#4c4c4c"/><rect x="1058" y="630" width="1" height="1" fill="#4c4c4c"/><rect x="1058" y="593" width="1" height="1" fill="#4c4c4c"/><rect x="1058" y="556" width="1" height="1" fill="#4c4c4c"/><rect x="1058" y="519" width="1" height="1" fill="#4c4c4c"/><rect x="1058" y="482" width="1" height="1" fill="#4c4c4c"/><rect x="1058" y="446" width="1" height="1" fill="#4c4c4c"/><rect x="1058" y="409" width="1" height="1" fill="#4c4c4c"/><rect x="1058" y="372" width="1" height="1" fill="#4c4c4c"/><rect x="1058" y="335" width="1" height="1" fill="#4c4c4c"/><rect x="1058" y="298" width="1" height="1" fill="#4c4c4c"/><rect x="1058" y="261" width="1" height="1" fill="#4c4c4c"/><rect x="1058" y="224" width="1" height="1" fill="#4c4c4c"/><rect x="1058" y="187" width="1" height="1" fill="#4c4c4c"/><rect x="1095" y="704" width="1" height="1" fill="#4c4c4c"/><rect x="1095" y="667" width="1" height="1" fill="#4c4c4c"/><rect x="1095" y="630" width="1" height="1" fill="#4c4c4c"/><rect x="1095" y="593" width="1" height="1" fill="#4c4c4c"/><rect x="1095" y="556" width="1" height="1" fill="#4c4c4c"/><rect x="1095" y="519" width="1" height="1" fill="#4c4c4c"/><rect x="1095" y="482" width="1" height="1" fill="#4c4c4c"/><rect x="1095" y="446" width="1" height="1" fill="#4c4c4c"/><rect x="1095" y="409" width="1" height="1" fill="#4c4c4c"/><rect x="1095" y="372" width="1" height="1" fill="#4c4c4c"/><rect x="1095" y="335" width="1" height="1" fill="#4c4c4c"/><rect x="1095" y="298" width="1" height="1" fill="#4c4c4c"/><rect x="1095" y="261" width="1" height="1" fill="#4c4c4c"/><rect x="1095" y="224" width="1" height="1" fill="#4c4c4c"/><rect x="1095" y="187" width="1" height="1" fill="#4c4c4c"/><rect x="1132" y="704" width="1" height="1" fill="#4c4c4c"/><rect x="1132" y="667" width="1" height="1" fill="#4c4c4c"/><rect x="1132" y="630" width="1" height="1" fill="#4c4c4c"/><rect x="1132" y="593" width="1" height="1" fill="#4c4c4c"/><rect x="1132" y="556" width="1" height="1" fill="#4c4c4c"/><rect x="1132" y="519" width="1" height="1" fill="#4c4c4c"/><rect x="1132" y="482" width="1" height="1" fill="#4c4c4c"/><rect x="1132" y="446" width="1" height="1" fill="#4c4c4c"/><rect x="1132" y="409" width="1" height="1" fill="#4c4c4c"/><rect x="1132" y="372" width="1" height="1" fill="#4c4c4c"/><rect x="1132" y="335" width="1" height="1" fill="#4c4c4c"/><rect x="1132" y="298" width="1" height="1" fill="#4c4c4c"/><rect x="1132" y="261" width="1" height="1" fill="#4c4c4c"/><rect x="1132" y="224" width="1" height="1" fill="#4c4c4c"/><rect x="1132" y="187" width="1" height="1" fill="#4c4c4c"/><rect x="431" y="261" width="370" height="1" fill="#e8e8e8"/><rect x="431" y="630" width="370" height="1" fill="#e8e8e8"/><rect x="431" y="261" width="1" height="370" fill="#e8e8e8"/><rect x="800" y="261" width="1" height="370" fill="#e8e8e8"/><circle cx="616" cy="446" r="4.6" fill="none" stroke="#a80000" stroke-width="1.3"/><path d="M611.5,446 H620.5 M616,441.5 V450.5" stroke="#700000" stroke-width="1.1"/></g></svg>
<div class="a dock"></div>
<div class="a" style="left:1155px;top:114px;width:1px;height:684px;background:#d6d6d6"></div>
<div class="a" style="left:1284px;top:118px;font-size:11.5px;color:#222">Lista de capas</div>
<div class="a" style="left:1155px;top:135px;width:300px;height:28px;background:linear-gradient(#e2e2e2,#f4f4f4);border:2px solid #b4b4b4;border-radius:2px"></div>
<div class="a" style="left:1214.5px;top:136px;width:1.6px;height:26px;background:#b4b4b4"></div>
<div class="a" style="left:1274.5px;top:136px;width:1.6px;height:26px;background:#b4b4b4"></div>
<div class="a" style="left:1334.5px;top:136px;width:1.6px;height:26px;background:#b4b4b4"></div>
<div class="a" style="left:1394.5px;top:136px;width:1.6px;height:26px;background:#b4b4b4"></div>
<div class="a" style="left:1181px;top:169px;width:16px;height:9px;border:1px solid #000"></div>
<div class="a" style="left:1203px;top:166px;font-size:13px">0</div>
<svg class="a" style="left:1154px;top:113px" width="301" height="80"><g transform="translate(-1154,-113)"><circle cx="1164" cy="124" r="7" fill="#6a6a6a"/><path d="M1161,121 L1167,127 M1167,121 L1161,127" stroke="#fff" stroke-width="2.2"/><circle cx="1182" cy="124" r="7" fill="#6a6a6a"/><rect x="1178.5" y="123" width="5.5" height="4.5" fill="none" stroke="#fff" stroke-width="1.1"/><path d="M1180.5,121.5 V120.5 H1186 V125 H1184.5" fill="none" stroke="#fff" stroke-width="1.1"/><g transform="translate(1185,148.4) scale(1.0)"><path d="M-7.7,0.8 C-6.5,-3.2 -3.5,-5.5 0,-5.5 C3.5,-5.5 6.5,-3.5 7.7,0.8 C5.8,3.8 3,5.6 0,5.6 C-3,5.6 -5.8,3.8 -7.7,0.8 Z" fill="#000"/><path d="M-4.9,-0.9 C-4.6,2.6 -2.5,4 0,4 C2.5,4 4.6,2.6 4.9,-0.9 C4.2,-0.6 3.6,-1.1 3.1,-1.5 C2.9,1 1.6,2.2 0,2.2 C-1.6,2.2 -2.9,1 -3.1,-1.5 C-3.6,-1.1 -4.2,-0.6 -4.9,-0.9 Z" fill="#fff"/><circle cx="-0.9" cy="-0.6" r="0.8" fill="#fff" opacity="0.5"/></g><g transform="translate(1245,148.6) scale(1.0)"><path d="M-7.7,0.8 C-6.5,-3.2 -3.5,-5.5 0,-5.5 C3.5,-5.5 6.5,-3.5 7.7,0.8 C5.8,3.8 3,5.6 0,5.6 C-3,5.6 -5.8,3.8 -7.7,0.8 Z" fill="#9e9e9e"/><path d="M-4.9,-0.9 C-4.6,2.6 -2.5,4 0,4 C2.5,4 4.6,2.6 4.9,-0.9 C4.2,-0.6 3.6,-1.1 3.1,-1.5 C2.9,1 1.6,2.2 0,2.2 C-1.6,2.2 -2.9,1 -3.1,-1.5 C-3.6,-1.1 -4.2,-0.6 -4.9,-0.9 Z" fill="#fff"/><circle cx="-0.9" cy="-0.6" r="0.8" fill="#fff" opacity="0.5"/></g><path d="M1303.5,143.3 h3.3 v4.2 h4.2 v3.3 h-4.2 v4.2 h-3.3 v-4.2 h-4.2 v-3.3 h4.2 z" fill="#ff0000" stroke="#222" stroke-width="0.5"/><rect x="1358.8" y="147.2" width="12.2" height="3.4" fill="#ff0000" stroke="#222" stroke-width="0.5"/><g transform="translate(1418,155.7) rotate(-42.92)"><path d="M0,0 L3.5,-1.3 L19.528952864913116,-1.3 L19.528952864913116,1.3 L3.5,1.3 Z" fill="#e0a838" stroke="#8a5a10" stroke-width="0.6"/><path d="M0,0 L3.5,-1.3 L3.5,1.3 Z" fill="#f0e0b0"/><path d="M0,0 L1.5,-0.6 L1.5,0.6 Z" fill="#333"/><rect x="16.028952864913116" y="-1.3" width="3.5" height="2.6" fill="#f01818"/></g><g transform="translate(1394.5,179.1) rotate(-42.99)"><path d="M0,0 L3.5,-1.3 L18.18378398463859,-1.3 L18.18378398463859,1.3 L3.5,1.3 Z" fill="#e0a838" stroke="#8a5a10" stroke-width="0.6"/><path d="M0,0 L3.5,-1.3 L3.5,1.3 Z" fill="#f0e0b0"/><path d="M0,0 L1.5,-0.6 L1.5,0.6 Z" fill="#333"/><rect x="14.683783984638591" y="-1.3" width="3.5" height="2.6" fill="#f01818"/></g><g transform="translate(1423.2,172.4) scale(1.0)"><path d="M-7.7,0.8 C-6.5,-3.2 -3.5,-5.5 0,-5.5 C3.5,-5.5 6.5,-3.5 7.7,0.8 C5.8,3.8 3,5.6 0,5.6 C-3,5.6 -5.8,3.8 -7.7,0.8 Z" fill="#000"/><path d="M-4.9,-0.9 C-4.6,2.6 -2.5,4 0,4 C2.5,4 4.6,2.6 4.9,-0.9 C4.2,-0.6 3.6,-1.1 3.1,-1.5 C2.9,1 1.6,2.2 0,2.2 C-1.6,2.2 -2.9,1 -3.1,-1.5 C-3.6,-1.1 -4.2,-0.6 -4.9,-0.9 Z" fill="#fff"/><circle cx="-0.9" cy="-0.6" r="0.8" fill="#fff" opacity="0.5"/></g><path d="M1441.8,173.5 V170 C1441.8,165.5 1447.8,165.5 1447.8,170 V173.5" fill="none" stroke="#b8b8b8" stroke-width="1.5"/><rect x="1440" y="173" width="9.6" height="6.6" fill="#b8b8b8"/></g></svg>
<div class="a rtb"></div>
<svg class="a" style="left:1455px;top:113px" width="45" height="400"><g transform="translate(-1455,-113)"><rect x="1456.2" y="126.3" width="42.5" height="42" rx="6" fill="#b5b5b5"/><rect x="1456.2" y="423" width="42.5" height="42.5" rx="6" fill="#b5b5b5"/><rect x="1462" y="122.3" width="1.6" height="1.6" fill="#9a9a9a"/><rect x="1468" y="122.3" width="1.6" height="1.6" fill="#9a9a9a"/><rect x="1474" y="122.3" width="1.6" height="1.6" fill="#9a9a9a"/><rect x="1480" y="122.3" width="1.6" height="1.6" fill="#9a9a9a"/><rect x="1486" y="122.3" width="1.6" height="1.6" fill="#9a9a9a"/><rect x="1458" y="267" width="1" height="1" fill="#555"/><rect x="1461" y="267" width="1" height="1" fill="#555"/><rect x="1464" y="267" width="1" height="1" fill="#555"/><rect x="1467" y="267" width="1" height="1" fill="#555"/><rect x="1470" y="267" width="1" height="1" fill="#555"/><rect x="1473" y="267" width="1" height="1" fill="#555"/><rect x="1476" y="267" width="1" height="1" fill="#555"/><rect x="1479" y="267" width="1" height="1" fill="#555"/><rect x="1482" y="267" width="1" height="1" fill="#555"/><rect x="1485" y="267" width="1" height="1" fill="#555"/><rect x="1488" y="267" width="1" height="1" fill="#555"/><rect x="1491" y="267" width="1" height="1" fill="#555"/><rect x="1494" y="267" width="1" height="1" fill="#555"/><rect x="1497" y="267" width="1" height="1" fill="#555"/><rect x="1458" y="415" width="1" height="1" fill="#555"/><rect x="1461" y="415" width="1" height="1" fill="#555"/><rect x="1464" y="415" width="1" height="1" fill="#555"/><rect x="1467" y="415" width="1" height="1" fill="#555"/><rect x="1470" y="415" width="1" height="1" fill="#555"/><rect x="1473" y="415" width="1" height="1" fill="#555"/><rect x="1476" y="415" width="1" height="1" fill="#555"/><rect x="1479" y="415" width="1" height="1" fill="#555"/><rect x="1482" y="415" width="1" height="1" fill="#555"/><rect x="1485" y="415" width="1" height="1" fill="#555"/><rect x="1488" y="415" width="1" height="1" fill="#555"/><rect x="1491" y="415" width="1" height="1" fill="#555"/><rect x="1494" y="415" width="1" height="1" fill="#555"/><rect x="1497" y="415" width="1" height="1" fill="#555"/><rect x="1463.5" y="134.0" width="27" height="27" fill="#fff" stroke="#3a3a3a" stroke-width="1"/><rect x="1463" y="133.5" width="28" height="5" fill="#000"/><rect x="1464.2" y="134.5" width="3" height="3" fill="#fff"/><rect x="1463.5" y="180.8" width="27" height="27" fill="#fff" stroke="#3a3a3a" stroke-width="1"/><rect x="1463" y="180.3" width="28" height="5" fill="#000"/><rect x="1464.2" y="181.3" width="3" height="3" fill="#fff"/><rect x="1463.5" y="226.7" width="27" height="27" fill="#fff" stroke="#3a3a3a" stroke-width="1"/><rect x="1463" y="226.2" width="28" height="5" fill="#000"/><rect x="1464.2" y="227.2" width="3" height="3" fill="#fff"/><rect x="1463.5" y="282.5" width="27" height="27" fill="#fff" stroke="#3a3a3a" stroke-width="1"/><rect x="1463" y="282" width="28" height="5" fill="#000"/><rect x="1464.2" y="283" width="3" height="3" fill="#fff"/><rect x="1463.5" y="328.5" width="27" height="27" fill="#fff" stroke="#3a3a3a" stroke-width="1"/><rect x="1463" y="328" width="28" height="5" fill="#000"/><rect x="1464.2" y="329" width="3" height="3" fill="#fff"/><rect x="1463.5" y="374.7" width="27" height="27" fill="#fff" stroke="#3a3a3a" stroke-width="1"/><rect x="1463" y="374.2" width="28" height="5" fill="#000"/><rect x="1464.2" y="375.2" width="3" height="3" fill="#fff"/><rect x="1463.5" y="430.9" width="27" height="27" fill="#fff" stroke="#3a3a3a" stroke-width="1"/><rect x="1463" y="430.4" width="28" height="5" fill="#000"/><rect x="1464.2" y="431.4" width="3" height="3" fill="#fff"/><rect x="1463.5" y="477.5" width="27" height="27" fill="#fff" stroke="#3a3a3a" stroke-width="1"/><rect x="1463" y="477" width="28" height="5" fill="#000"/><rect x="1464.2" y="478" width="3" height="3" fill="#fff"/><g transform="translate(1463,133.5)"><path d="M8.5,12 L17,8.5 L17,19 L8.5,22.5 Z" fill="#bbb" stroke="#555" stroke-width="0.7"/><path d="M10.5,11.5 L19.5,8 L19.5,18.5 L10.5,22 Z" fill="#ddd" stroke="#555" stroke-width="0.7"/><path d="M12.5,11 L21.5,7.5 L21.5,18 L12.5,21.5 Z" fill="#fff" stroke="#555" stroke-width="0.7"/><path d="M14.5,18.5 L19.5,11 L19.5,17 Z" fill="none" stroke="#f03030" stroke-width="0.8"/></g><g transform="translate(1463,180.3)"><rect x="7.5" y="10.5" width="11" height="8" fill="#f4e8b8" stroke="#555" stroke-width="0.8"/><circle cx="16.5" cy="19" r="4.8" fill="#f4e8b8" stroke="#555" stroke-width="0.8" opacity="0.9"/></g><g transform="translate(1463,226.2)"><rect x="5.5" y="11" width="17" height="11.5" rx="2" fill="#f6f6f2" stroke="#b8c8e8" stroke-width="0.8"/></g><g transform="translate(1463,282)"><rect x="3.5" y="8.5" width="4" height="3" rx="0.8" fill="#000"/><rect x="10" y="8.5" width="14" height="2.8" rx="0.6" fill="#fff" stroke="#444" stroke-width="0.7"/><rect x="3.5" y="14.5" width="4" height="3" rx="0.8" fill="#000"/><rect x="10" y="14.5" width="14" height="2.8" rx="0.6" fill="#fff" stroke="#444" stroke-width="0.7"/><rect x="3.5" y="20.5" width="4" height="3" rx="0.8" fill="#000"/><rect x="10" y="20.5" width="14" height="2.8" rx="0.6" fill="#fff" stroke="#444" stroke-width="0.7"/></g><g transform="translate(1463,328)"><path d="M6.5,9.5 L21.5,9.5 L16,16 L16,23 L13,22 L12.5,16 Z" fill="#aaa" stroke="#777" stroke-width="0.6"/><ellipse cx="14" cy="9.8" rx="7.3" ry="1.3" fill="#777"/><path d="M13.5,16 L13.5,22" stroke="#eee" stroke-width="1"/></g><g transform="translate(1463,374.2)"><path d="M6.5,9 L12,13 L12,20 L6.5,23.5 Z" fill="#f4f4f4" stroke="#333" stroke-width="0.7"/><rect x="12" y="12.5" width="10" height="8" rx="2" fill="#999" stroke="#555" stroke-width="0.6"/><rect x="12" y="13" width="3" height="7" fill="#fff"/><path d="M4,16.5 L24,16.5" stroke="#f08080" stroke-width="0.8" stroke-dasharray="1.5,1" opacity="0.7"/></g><g transform="translate(1463,430.4)"><g stroke="#999" stroke-width="0.6"><path d="M2.5,9 H15 M2.5,12.5 H12.5 M2.5,15.5 H16 M2.5,18.5 H17"/></g><path d="M0.5,22 H27.5" stroke="#333" stroke-width="0.8"/><path d="M3,25 H6 M10,25 H25" stroke="#555" stroke-width="0.8"/></g><g transform="translate(1463,477)"><rect x="7.5" y="9" width="13" height="15" rx="1" fill="#c7892a" stroke="#9a6a20" stroke-width="0.6"/><rect x="9" y="10.5" width="10" height="12" fill="#f2f2f2"/><path d="M10.5,13 H17.5 M10.5,15 H17.5 M10.5,17 H16.5" stroke="#ccc" stroke-width="0.6"/><rect x="11" y="7.8" width="6" height="3" rx="0.8" fill="#999" stroke="#666" stroke-width="0.5"/></g></g></svg>
<div class="a status"></div>
<div class="st" style="left:2px;top:807px">101.6,100.6</div>
<div class="st" style="left:2px;top:827px">@1.6,0.6</div>
<div class="a" style="left:253px;top:802px;width:1px;height:40px;background:#888"></div>
<div class="st" style="left:256px;top:807px">142.9787&lt;45°</div>
<div class="st" style="left:256px;top:827px">@1.7088&lt;21°</div>
<div class="st" style="left:569px;top:816px">Seleccionar entidad o región</div>
<svg class="a" style="left:0;top:798px" width="1500" height="46"><circle cx="509.5" cy="24" r="3" fill="#c4c4c4"/><circle cx="942.5" cy="24" r="3" fill="#c4c4c4"/><circle cx="1272" cy="24" r="3" fill="#c4c4c4"/><rect x="717.5" y="8.5" width="17" height="29" rx="8.5" fill="#fff" stroke="#444" stroke-width="0.9"/><path d="M717.5,21 H734.5" stroke="#444" stroke-width="0.9"/><rect x="724.7" y="10" width="2.8" height="8" rx="1.4" fill="#fff" stroke="#444" stroke-width="0.8"/><path d="M726,18 V21" stroke="#444" stroke-width="0.8"/></svg>
<div class="st" style="left:949px;top:816px">No hay entidades seleccionadas.</div>
<div class="a" style="left:370px;top:88px;width:165px;height:23px;background:linear-gradient(#fafafa,#eeeeee);border:1px solid #c8c8c8;box-shadow:1px 2px 2px rgba(0,0,0,.25)"></div>
<div class="a" style="left:374px;top:91px;font-size:13.9px;color:#111">Vista previa de impresión</div>
<svg class="a" style="left:0;top:0" width="420" height="113"><path d="M384,62 L384,84 L389,79.2 L393.3,88 L397.4,86.2 L393.4,77.6 L399.5,77.2 Z" fill="#fff" stroke="#000" stroke-width="1.3" stroke-linejoin="round"/></svg>
</body></html>
